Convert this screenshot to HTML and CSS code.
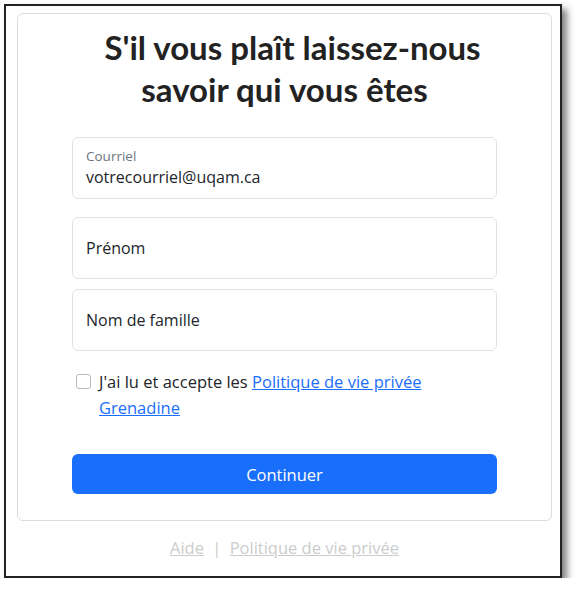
FILE: index.html
```html
<!DOCTYPE html>
<html lang="fr">
<head>
    <meta charset="UTF-8">
    <meta name="viewport" content="width=device-width, initial-scale=1.0">
    <title>Grenadine</title>
    <link rel="stylesheet" href="styles.css">
</head>
<body>
    <div class="frame">
        <div class="card">
            <h1 class="title">S'il vous plaît laissez-nous savoir qui vous êtes</h1>
            <form class="signup">
                <div class="field field-filled">
                    <span class="field-label">Courriel</span>
                    <span class="field-value">votrecourriel@uqam.ca</span>
                </div>
                <div class="field field-first">
                    <span class="field-placeholder">Prénom</span>
                </div>
                <div class="field">
                    <span class="field-placeholder">Nom de famille</span>
                </div>
                <label class="consent">
                    <span class="checkbox"></span>
                    <span class="consent-text">J'ai lu et accepte les <a href="#">Politique de vie privée</a> <a href="#">Grenadine</a></span>
                </label>
                <button type="button" class="btn-primary">Continuer</button>
            </form>
        </div>
        <div class="footer-links">
            <a href="#">Aide</a>
            <span class="sep">|</span>
            <a href="#">Politique de vie privée</a>
        </div>
    </div>
</body>
</html>
```

FILE: styles.css
```css
body {
    margin: 0;
    background: #fff;
    font-family: "Open Sans", "Noto Sans", sans-serif;
    color: #212529;
}
.frame {
    margin: 4px 0 0 4px;
    width: 558px;
    height: 574px;
    box-sizing: border-box;
    border: 2px solid #222;
    box-shadow: 5px 5px 7px rgba(0, 0, 0, 0.5);
    padding: 7px 8px 0 11px;
    background: #fff;
}
.card {
    height: 508px;
    box-sizing: border-box;
    border: 1px solid #dcdcdc;
    border-radius: 6px;
    padding: 12px 54px 0 54px;
}
.title {
    margin: 0;
    text-align: center;
    text-indent: 16px;
    font-family: Lato, "Open Sans", sans-serif;
    font-weight: 700;
    font-size: 33px;
    line-height: 42px;
    color: #222;
}
.signup {
    display: flex;
    flex-direction: column;
    margin-top: 27px;
}
.field {
    height: 62px;
    box-sizing: border-box;
    border: 1px solid #dee2e6;
    border-radius: 6px;
    padding: 0 13px;
    display: flex;
    flex-direction: column;
    justify-content: center;
    font-size: 16px;
}
.field + .field { margin-top: 10px; }
.field-filled + .field { margin-top: 18px; }
.field-filled { justify-content: flex-start; padding-top: 9px; }
.field-label {
    font-size: 13.5px;
    color: #6c757d;
    line-height: 18px;
}
.field-value {
    line-height: 24px;
}
.consent {
    display: flex;
    align-items: flex-start;
    gap: 8px;
    margin: 18px 0 0 4px;
    font-size: 16.5px;
    line-height: 26px;
}
.checkbox {
    flex: none;
    width: 13px;
    height: 13px;
    margin-top: 5px;
    border: 1px solid #bbb;
    border-radius: 3px;
}
.consent a { color: #1a6efc; }
.btn-primary {
    margin-top: 33px;
    height: 40px;
    border: 0;
    border-radius: 6px;
    background: #1a6efc;
    color: #fff;
    font-family: inherit;
    font-size: 16.5px;
}
.footer-links {
    margin-top: 15px;
    text-align: center;
    font-size: 16.5px;
    color: #ccc;
}
.footer-links a { color: #ccc; }
.sep { margin: 0 4px; }
```
